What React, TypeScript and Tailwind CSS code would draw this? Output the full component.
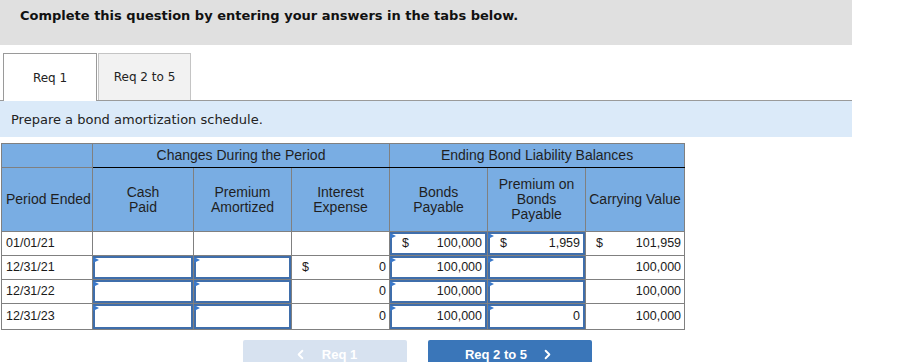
import { ChevronLeft, ChevronRight } from "lucide-react";

type Cell = {
    input?: boolean;
    dollar?: boolean;
    value?: string;
};

const rows: { period: string; cells: Cell[] }[] = [
    {
        period: "01/01/21",
        cells: [
            {},
            {},
            {},
            { input: true, dollar: true, value: "100,000" },
            { input: true, dollar: true, value: "1,959" },
            { dollar: true, value: "101,959" },
        ],
    },
    {
        period: "12/31/21",
        cells: [
            { input: true },
            { input: true },
            { dollar: true, value: "0" },
            { input: true, value: "100,000" },
            { input: true },
            { value: "100,000" },
        ],
    },
    {
        period: "12/31/22",
        cells: [
            { input: true },
            { input: true },
            { value: "0" },
            { input: true, value: "100,000" },
            { input: true },
            { value: "100,000" },
        ],
    },
    {
        period: "12/31/23",
        cells: [
            { input: true },
            { input: true },
            { value: "0" },
            { input: true, value: "100,000" },
            { input: true, value: "0" },
            { value: "100,000" },
        ],
    },
];

function CellBody({ cell }: { cell: Cell }) {
    return (
        <div className="flex items-center justify-between h-full pl-[10px] pr-[3px]">
            <span>{cell.dollar ? "$" : ""}</span>
            <span>{cell.value ?? ""}</span>
        </div>
    );
}

function DataCell({ cell, last }: { cell: Cell; last: boolean }) {
    if (cell.input) {
        return (
            <td className="border border-[#808080] p-0">
                <div className={`relative border-2 border-[#3f6eab] ${last ? "h-[25px]" : "h-[23px]"}`}>
                    {/* little flag in the corner of editable cells */}
                    <span className="absolute -left-[2px] -top-px w-0 h-0 border-y-[3px] border-y-transparent border-l-[6px] border-l-[#3a78c9]" />
                    <CellBody cell={cell} />
                </div>
            </td>
        );
    }
    return (
        <td className={`border border-[#808080] p-0 ${last ? "h-[25px]" : "h-[23px]"}`}>
            <CellBody cell={cell} />
        </td>
    );
}

export default function App() {
    return (
        <div className="w-[917px] h-[362px] overflow-hidden bg-white">
            <div className="w-[852px] h-[45px] bg-[#e0e0e0] pl-[20px] pt-[6px] text-[13px] font-bold text-[#111] font-['DejaVu_Sans',sans-serif]">
                Complete this question by entering your answers in the tabs below.
            </div>

            <div className="mt-[8px] w-[852px] flex items-end border-b border-[#9a9a9a] font-['DejaVu_Sans',sans-serif] text-[12px] text-[#222]">
                <div className="ml-[3px] w-[94px] h-[48px] -mb-px bg-white border border-b-0 border-[#9a9a9a] flex items-center justify-center">
                    Req 1
                </div>
                <div className="ml-[1px] w-[93px] h-[47px] bg-[#f2f2f2] border border-b-0 border-[#c4c4c4] flex items-center justify-center">
                    Req 2 to 5
                </div>
            </div>

            <div className="w-[852px] h-[36px] bg-[#dbeaf9] pl-[11px] pt-px flex items-center text-[13px] text-[#222] font-['DejaVu_Sans',sans-serif]">
                Prepare a bond amortization schedule.
            </div>

            <table className="mt-[6px] ml-px w-[683px] table-fixed border-collapse font-['Liberation_Sans',Arial,sans-serif] text-[12.5px] text-[#1a1a1a]">
                <colgroup>
                    <col className="w-[91px]" />
                    <col className="w-[101px]" />
                    <col className="w-[98px]" />
                    <col className="w-[98px]" />
                    <col className="w-[98px]" />
                    <col className="w-[98px]" />
                    <col className="w-[99px]" />
                </colgroup>
                <thead className="bg-[#79ade3] text-[14px] text-[#1f1f1f] leading-[15px]">
                    <tr className="h-[24px]">
                        <th className="border border-[#808080] font-normal" />
                        <th colSpan={3} className="border border-[#808080] border-b-black font-normal">
                            Changes During the Period
                        </th>
                        <th colSpan={3} className="border border-[#808080] border-b-black font-normal">
                            Ending Bond Liability Balances
                        </th>
                    </tr>
                    <tr className="h-[64px]">
                        <th className="border border-[#808080] font-normal text-left pl-[4px]">Period Ended</th>
                        <th className="border border-[#808080] font-normal">Cash<br />Paid</th>
                        <th className="border border-[#808080] font-normal">Premium<br />Amortized</th>
                        <th className="border border-[#808080] font-normal">Interest<br />Expense</th>
                        <th className="border border-[#808080] font-normal">Bonds<br />Payable</th>
                        <th className="border border-[#808080] font-normal">Premium on<br />Bonds<br />Payable</th>
                        <th className="border border-[#808080] font-normal">Carrying Value</th>
                    </tr>
                </thead>
                <tbody>
                    {rows.map((row, i) => (
                        <tr key={row.period}>
                            <td className={`border border-[#808080] pl-[4px] ${i === rows.length - 1 ? "h-[25px]" : "h-[23px]"}`}>
                                {row.period}
                            </td>
                            {row.cells.map((cell, j) => (
                                <DataCell key={j} cell={cell} last={i === rows.length - 1} />
                            ))}
                        </tr>
                    ))}
                </tbody>
            </table>

            <div className="mt-[10px] flex font-['Liberation_Sans',Arial,sans-serif] text-[13px] font-bold text-white">
                <button className="ml-[243px] w-[164px] h-[30px] rounded-t-[2px] bg-[#d7e2f0] flex items-center justify-center gap-[14px] pb-px">
                    <ChevronLeft size={15} strokeWidth={3} />
                    <span>Req 1</span>
                </button>
                <button className="ml-[21px] w-[164px] h-[30px] rounded-t-[2px] bg-[#3a76b9] flex items-center justify-center gap-[13px] pb-px">
                    <span>Req 2 to 5</span>
                    <ChevronRight size={15} strokeWidth={3} />
                </button>
            </div>
        </div>
    );
}
